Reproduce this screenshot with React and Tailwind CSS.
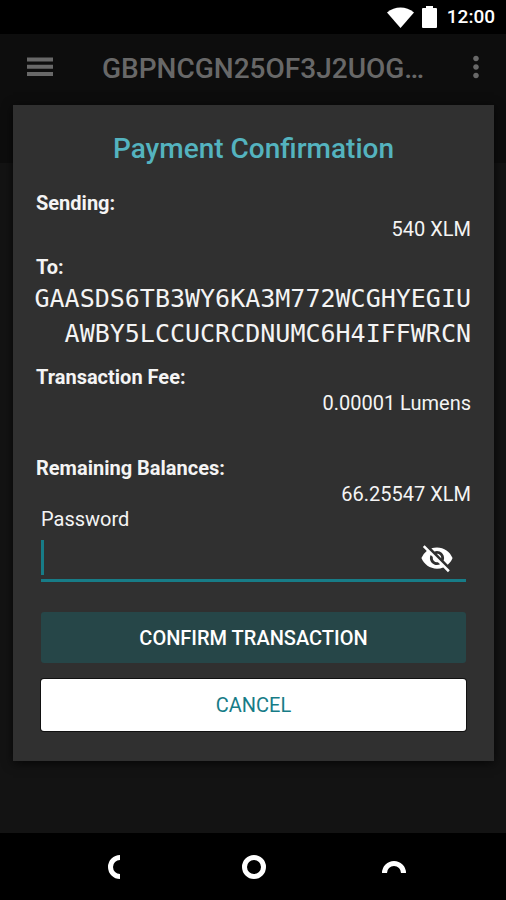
import { MdMoreVert, MdVisibilityOff } from "react-icons/md";

const ACCOUNT = "GBPNCGN25OF3J2UOG…";
const RECIPIENT = ["GAASDS6TB3WY6KA3M772WCGHYEGIU", "AWBY5LCCUCRCDNUMC6H4IFFWRCN"];

function StatusBar() {
  return (
    <div className="flex h-[34px] items-center justify-end bg-black pr-[11px] text-white">
      <svg className="mr-2 h-[21px] w-[27px]" viewBox="0 0 27 21" fill="currentColor" aria-hidden="true">
        <path d="M0 5.500C8-1.200 19-1.200 27 5.500L13.500 21Z" />
      </svg>
      <svg className="mr-[10px] h-[22px] w-[15px]" viewBox="0 0 15 22" fill="currentColor" aria-hidden="true">
        <path d="M4 0h7v2h3a1 1 0 0 1 1 1v18a1 1 0 0 1-1 1H1a1 1 0 0 1-1-1V3a1 1 0 0 1 1-1h3z" />
      </svg>
      <span className="pt-px text-[19px] font-medium">12:00</span>
    </div>
  );
}

function Header() {
  return (
    <header className="flex h-[71px] items-start bg-[#0d0d0d] px-5 pt-[13px] text-[#686868]">
      <button type="button" aria-label="Menu" className="flex h-10 w-10 items-center justify-center">
        <svg className="h-5 w-[26px]" viewBox="0 0 26 20" fill="currentColor" aria-hidden="true">
          <path d="M0 0.500h26v4H0zM0 7.700h26v4H0zM0 15h26v4H0z" />
        </svg>
      </button>
      <h1 className="ml-[42px] min-w-0 flex-1 truncate text-[28px] leading-[44px] font-medium">{ACCOUNT}</h1>
      <button type="button" aria-label="More options" className="-mr-2 flex h-10 w-9 items-center justify-center">
        <MdMoreVert size={34} />
      </button>
    </header>
  );
}

function Detail({ label, children }) {
  return (
    <div>
      <dt className="font-bold">{label}</dt>
      <dd className="text-right">{children}</dd>
    </div>
  );
}

function PaymentDialog() {
  return (
    <section
      role="dialog"
      aria-labelledby="dialog-title"
      className="mr-3 ml-[13px] bg-[#303030] px-[23px] pt-[25px] pb-[30px] text-[20px] leading-[26px] text-[#f4f4f4] shadow-[0_2px_10px_rgba(0,0,0,0.7)]"
    >
      <h2 id="dialog-title" className="text-center text-[28px] leading-[38px] font-medium text-[#54b3bf]">
        Payment Confirmation
      </h2>

      <dl className="mt-[22px]">
        <Detail label="Sending:">540 XLM</Detail>
        <div className="mt-3">
          <dt className="font-bold">To:</dt>
          <dd className="mt-px flex flex-col items-end font-['DejaVu_Sans_Mono',monospace] text-[25px] leading-[35px]">
            {RECIPIENT.map((line) => (
              <span key={line}>{line}</span>
            ))}
          </dd>
        </div>
        <div className="mt-[13px]">
          <Detail label="Transaction Fee:">0.00001 Lumens</Detail>
        </div>
        <div className="mt-[39px]">
          <Detail label="Remaining Balances:">66.25547 XLM</Detail>
        </div>
      </dl>

      <form className="mx-[5px]" onSubmit={(e) => e.preventDefault()}>
        <label htmlFor="password" className="block leading-6">
          Password
        </label>
        <div className="mt-[9px] flex items-center border-b-[3px] border-[#177c87] pb-1">
          <span className="h-[35px] w-[3px] bg-[#177c87]" />
          <input id="password" type="password" className="h-[35px] min-w-0 flex-1 bg-transparent px-1 outline-none" />
          <button type="button" aria-label="Show password" className="mr-3 text-white">
            <MdVisibilityOff size={34} />
          </button>
        </div>
        <button
          type="submit"
          className="mt-[30px] h-[51px] w-full rounded-[3px] bg-[#264648] font-medium text-white"
        >
          CONFIRM TRANSACTION
        </button>
        <button
          type="button"
          className="mt-4 h-[52px] w-full rounded-[3px] bg-white text-[#177c87] shadow-[0_0_0_1px_#111]"
        >
          CANCEL
        </button>
      </form>
    </section>
  );
}

function NavBar() {
  return (
    <nav className="flex h-[67px] items-center justify-around bg-black pr-[42px] pl-[44px] text-white">
      <button type="button" aria-label="Back">
        <svg className="h-6 w-6" viewBox="0 0 24 24" fill="none" stroke="currentColor" strokeWidth="5">
          <path d="M18 2.500a9.500 9.500 0 0 0 0 19" />
        </svg>
      </button>
      <button type="button" aria-label="Home">
        <svg className="h-6 w-6" viewBox="0 0 24 24" fill="none" stroke="currentColor" strokeWidth="5">
          <circle cx="12" cy="12" r="9.500" />
        </svg>
      </button>
      <button type="button" aria-label="Recent apps">
        <svg className="h-6 w-6" viewBox="0 0 24 24" fill="none" stroke="currentColor" strokeWidth="5">
          <path d="M2.500 18a9.500 9.500 0 0 1 19 0" />
        </svg>
      </button>
    </nav>
  );
}

export default function App() {
  return (
    <div className="flex min-h-screen flex-col bg-black font-[Roboto,sans-serif]">
      <StatusBar />
      <Header />
      <main className="flex-1 bg-[linear-gradient(#0d0d0d_58px,#131313_58px)]">
        <PaymentDialog />
      </main>
      <NavBar />
    </div>
  );
}
